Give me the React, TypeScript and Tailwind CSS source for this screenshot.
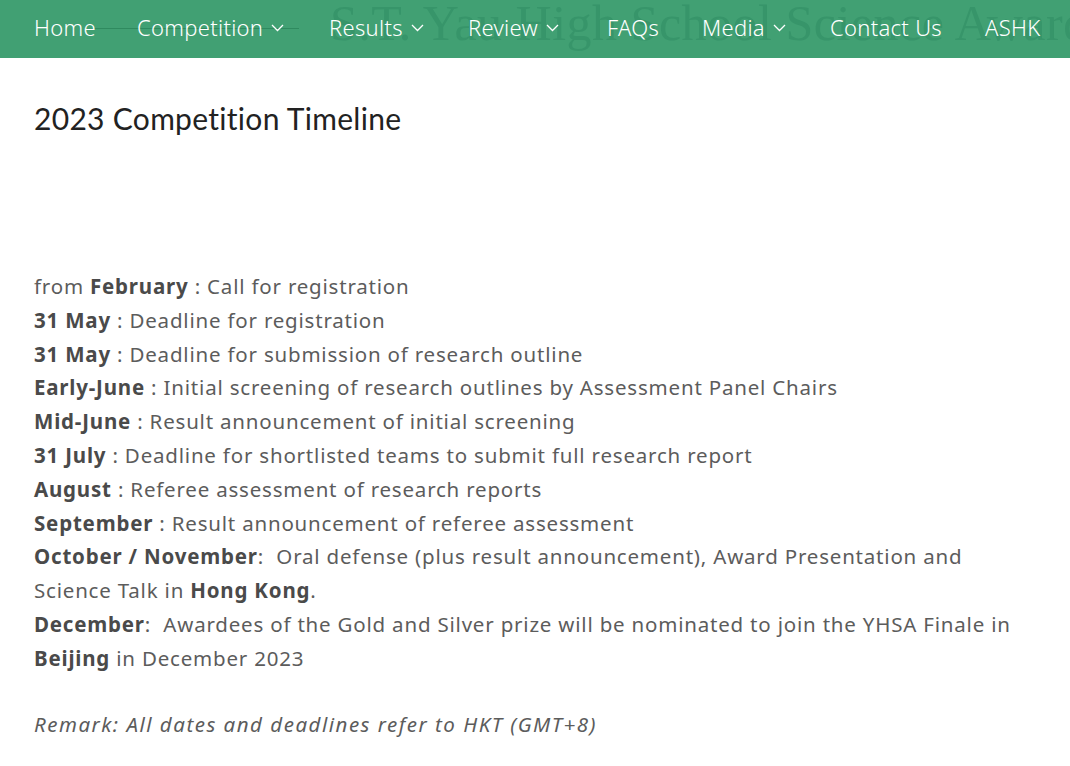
import React from "react";

const navItems: { label: string; w: string; chevron: boolean }[] = [
  { label: "Home", w: "w-[103px]", chevron: false },
  { label: "Competition", w: "w-[192px]", chevron: true },
  { label: "Results", w: "w-[139px]", chevron: true },
  { label: "Review", w: "w-[139px]", chevron: true },
  { label: "FAQs", w: "w-[95px]", chevron: false },
  { label: "Media", w: "w-[128px]", chevron: true },
  { label: "Contact Us", w: "w-[155px]", chevron: false },
  { label: "ASHK", w: "w-auto", chevron: false },
];

function Chevron() {
  return (
    <svg width="13" height="8" viewBox="0 0 13 8" className="ml-[8px] mt-[2px]" fill="none">
      <path d="M1 1l5.5 5.5L12 1" stroke="white" strokeWidth="1.3" />
    </svg>
  );
}

const B = ({ children }: { children: React.ReactNode }) => (
  <b className="text-[#4a4a4a] font-bold">{children}</b>
);

export default function App() {
  const sans = { fontFamily: "'Noto Sans', 'Open Sans', sans-serif" };
  return (
    <div className="w-[1070px] min-h-[766px] bg-white">
      <nav className="relative h-[58px] bg-[#41a073] overflow-hidden" style={sans}>
        <div
          aria-hidden="true"
          className="absolute left-[330px] top-[-6px] whitespace-nowrap text-[50px] tracking-[0.5px] text-[#37956a] leading-[58px] select-none"
          style={{ fontFamily: "'Liberation Serif', serif" }}
        >
          S.T. Yau High School Science Award
        </div>
        <div className="absolute left-[94px] top-[28px] w-[205px] h-px bg-[#2f8a5f]" />
        <ul className="relative flex items-center h-full pb-[4px] pl-[34px] text-white text-[22px] tracking-[0.3px] font-light">
          {navItems.map((it) => (
            <li key={it.label} className={`${it.w} flex items-center shrink-0`}>
              <span>{it.label}</span>
              {it.chevron && <Chevron />}
            </li>
          ))}
        </ul>
      </nav>

      <main className="px-[34px]">
        <h1
          className="pt-[42px] text-[30px] leading-[36px] tracking-[0.3px] text-[#222] font-normal"
          style={{ fontFamily: "Lato, 'Noto Sans', sans-serif" }}
        >
          2023 Competition Timeline
        </h1>
        <div
          className="mt-[134px] text-[20.5px] leading-[33.8px] tracking-[0.8px] text-[#5c5c5c] whitespace-nowrap"
          style={sans}
        >
          <p>
            from <B>February</B> : Call for registration
            <br />
            <B>31 May</B> : Deadline for registration
            <br />
            <B>31 May</B> : Deadline for submission of research outline
            <br />
            <B>Early-June</B> : Initial screening of research outlines by Assessment Panel Chairs
            <br />
            <B>Mid-June</B> : Result announcement of initial screening
            <br />
            <B>31 July</B> : Deadline for shortlisted teams to submit full research report
            <br />
            <B>August</B> : Referee assessment of research reports
            <br />
            <B>September</B> : Result announcement of referee assessment
            <br />
            <B>October / November</B>:&nbsp; Oral defense (plus result announcement), Award Presentation and
            <br />
            Science Talk in <B>Hong Kong</B>.
            <br />
            <B>December</B>:&nbsp; Awardees of the Gold and Silver prize will be nominated to join the YHSA Finale in
            <br />
            <B>Beijing</B> in December 2023
          </p>
          <p className="mt-[32px] italic tracking-[1.5px]">Remark: All dates and deadlines refer to HKT (GMT+8)</p>
        </div>
      </main>
    </div>
  );
}
